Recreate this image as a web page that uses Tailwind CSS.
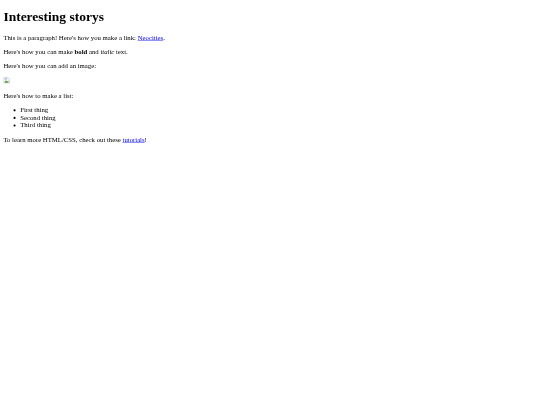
<!DOCTYPE html>
<html lang="en">
<head>
  <meta charset="UTF-8"/>
  <title>Interesting storys</title>
  <script src="https://cdn.jsdelivr.net/npm/@tailwindcss/browser@4"></script>
</head>
<body class="bg-white text-black">
  <div class="w-[540px] h-[405px] overflow-hidden">
    <div class="w-[1280px] origin-top-left scale-[0.421875] blur-[0.4px] px-2 py-[21.44px] font-['Liberation_Serif',serif] text-base leading-[normal]">
      <h1 class="text-[32px] leading-[normal] font-bold mb-[21.44px]">Interesting storys</h1>
      <p class="mb-4">This is a paragraph! Here's how you make a link: <a href="#" class="text-[#0000ee] underline">Neocities</a>.</p>
      <p class="mb-4">Here's how you can make <strong class="font-bold">bold</strong> and <em class="italic">italic</em> text.</p>
      <p class="mb-4">Here's how you can add an image:</p>
      <p class="mb-4">
        <svg class="inline-block align-baseline" width="16" height="16" viewBox="0 0 16 16">
          <path d="M1 1h9l5 5v9H1z" fill="#fff" stroke="#b4b4b4" stroke-width="1.5"/>
          <path d="M2 14l4-6 3 3 3-2v5H2z" fill="#4f9a3f"/>
          <path d="M3 3h6v4H3z" fill="#a9c4f2"/>
        </svg>
      </p>
      <p class="mb-4">Here's how to make a list:</p>
      <ul class="list-disc pl-10 mb-4">
        <li>First thing</li>
        <li>Second thing</li>
        <li>Third thing</li>
      </ul>
      <p>To learn more HTML/CSS, check out these <a href="#" class="text-[#0000ee] underline">tutorials</a>!</p>
    </div>
  </div>
</body>
</html>
